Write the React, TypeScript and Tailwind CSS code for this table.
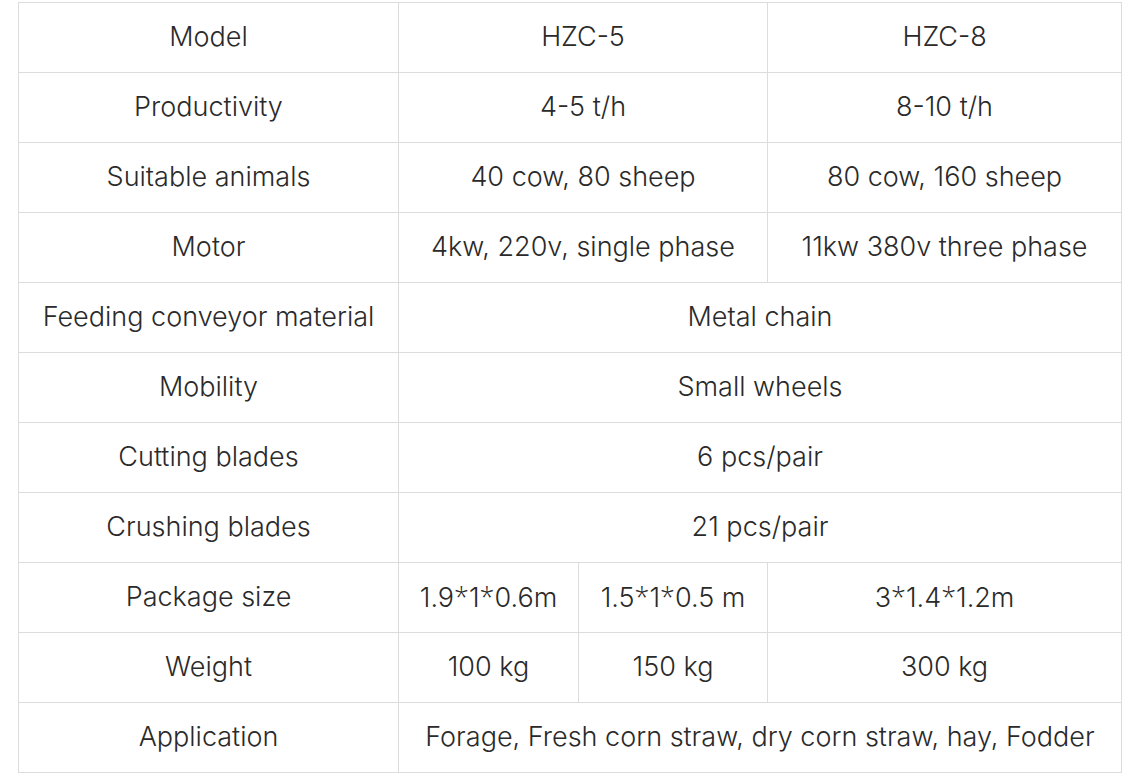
import React from "react";

const cell = "border border-[#dcdcdc] text-center align-middle h-[70px] p-0";

function T({ s }: { s: string }) {
  const parts = s.split("*");
  return (
    <>
      {parts.map((p, i) => (
        <React.Fragment key={i}>
          {i > 0 && <span style={{ fontFamily: "'Open Sans', sans-serif" }}>*</span>}
          {p}
        </React.Fragment>
      ))}
    </>
  );
}

export default function App() {
  const rows: (string | [string, number])[][] = [
    ["Model", ["HZC-5", 2], "HZC-8"],
    ["Productivity", ["4-5 t/h", 2], "8-10 t/h"],
    ["Suitable animals", ["40 cow, 80 sheep", 2], "80 cow, 160 sheep"],
    ["Motor", ["4kw, 220v, single phase", 2], "11kw 380v three phase"],
    ["Feeding conveyor material", ["Metal chain", 3]],
    ["Mobility", ["Small wheels", 3]],
    ["Cutting blades", ["6 pcs/pair", 3]],
    ["Crushing blades", ["21 pcs/pair", 3]],
    ["Package size", "1.9*1*0.6m", "1.5*1*0.5 m", "3*1.4*1.2m"],
    ["Weight", "100 kg", "150 kg", "300 kg"],
    ["Application", ["Forage, Fresh corn straw, dry corn straw, hay, Fodder", 3]],
  ];
  return (
    <div className="bg-white w-[1128px] h-[773px] pt-[2px] pl-[18px]" style={{ fontFamily: "Inter, 'Open Sans', sans-serif" }}>
      <table className="table-fixed border-collapse w-[1103px] text-[27px] font-light text-[#2a2a2a]">
        <colgroup>
          <col className="w-[380px]" />
          <col className="w-[180px]" />
          <col className="w-[189px]" />
          <col className="w-[354px]" />
        </colgroup>
        <tbody>
          {rows.map((r, i) => (
            <tr key={i}>
              {r.map((c, j) =>
                Array.isArray(c) ? (
                  <td key={j} colSpan={c[1]} className={cell}><T s={c[0]} /></td>
                ) : (
                  <td key={j} className={cell}><T s={c} /></td>
                )
              )}
            </tr>
          ))}
        </tbody>
      </table>
    </div>
  );
}
